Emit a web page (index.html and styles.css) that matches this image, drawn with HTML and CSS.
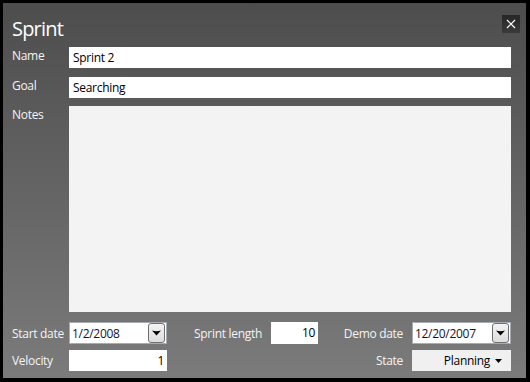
FILE: index.html
```html
<!DOCTYPE html>
<html>
<head>
<meta charset="utf-8">
<link rel="stylesheet" href="styles.css">
</head>
<body>
<div class="window">
  <div class="header">
    <div class="title">Sprint</div>
    <div class="close">
      <svg width="10" height="10" viewBox="0 0 10 10"><path d="M1 1L9 9M9 1L1 9" stroke="#fff" stroke-width="1.2"/></svg>
    </div>
  </div>
  <div class="row">
    <div class="label">Name</div>
    <div class="field">Sprint 2</div>
  </div>
  <div class="row row-goal">
    <div class="label">Goal</div>
    <div class="field">Searching</div>
  </div>
  <div class="row row-notes">
    <div class="label">Notes</div>
    <div class="notes"></div>
  </div>
  <div class="bottom">
    <div class="blabel">Start date</div>
    <div class="date">
      <span class="date-text">1/2/2008</span>
      <span class="date-btn"><svg width="9" height="6" viewBox="0 0 9 6"><path d="M0 0.5Q4.5 2 9 0.5L4.5 5.5Z" fill="#000"/></svg></span>
    </div>
    <div class="blabel right pr10">Sprint length</div>
    <div class="field num">10</div>
    <div class="blabel right pr10">Demo date</div>
    <div class="date">
      <span class="date-text">12/20/2007</span>
      <span class="date-btn"><svg width="9" height="6" viewBox="0 0 9 6"><path d="M0 0.5Q4.5 2 9 0.5L4.5 5.5Z" fill="#000"/></svg></span>
    </div>

    <div class="blabel">Velocity</div>
    <div class="field num">1</div>
    <div></div>
    <div></div>
    <div class="blabel right pr10">State</div>
    <div class="combo"><span>Planning</span><svg width="7" height="4" viewBox="0 0 7 4"><path d="M0 0H7L3.5 4Z" fill="#000"/></svg></div>
  </div>
</div>
</body>
</html>
```
FILE: styles.css
```css
html, body {
  margin: 0;
  padding: 0;
  background: #000;
}
body {
  width: 530px;
  height: 382px;
  overflow: hidden;
  font-family: "Open Sans", "Noto Sans", sans-serif;
  font-size: 12px;
  letter-spacing: -0.3px;
}
.window {
  margin: 3px 4px 0 3px;
  width: 523px;
  height: 375px;
  box-sizing: border-box;
  padding: 12px 15px 0 9px;
  background: linear-gradient(#4d4d4d, #7b7b7b);
  display: flex;
  flex-direction: column;
  color: #fff;
}
.header {
  height: 32px;
  display: flex;
  justify-content: space-between;
  align-items: flex-start;
}
.title {
  font-size: 20px;
  line-height: 26px;
  margin-top: 1px;
  letter-spacing: -0.8px;
  color: #fff;
}
.close {
  width: 18px;
  height: 18px;
  margin-right: -9px;
  background: linear-gradient(#262626, #3a3a3a);
  display: flex;
  align-items: center;
  justify-content: center;
}
.row {
  display: flex;
  height: 21px;
}
.row-goal { margin-top: 9px; }
.row-notes { margin-top: 8px; height: 206px; }
.label {
  width: 57px;
  line-height: 16px;
  padding-top: 1px;
  color: #f4f4f4;
}
.field {
  flex: 1;
  background: #fff;
  color: #000;
  line-height: 21px;
  padding: 0 4px;
  white-space: nowrap;
}
.notes {
  flex: 1;
  background: #f3f3f3;
}
.bottom {
  margin-top: 10px;
  display: grid;
  grid-template-columns: 57px 98px 104px 47px 94px 99px;
  grid-template-rows: 22px 21px;
  row-gap: 6px;
}
.blabel {
  color: #f4f4f4;
  display: flex;
  align-items: center;
  white-space: nowrap;
}
.right { justify-content: flex-end; }
.pr10 { padding-right: 9px; }
.num {
  text-align: right;
  padding-right: 3px;
}
.date {
  background: #fff;
  border: 1px solid #a5acb5;
  box-sizing: border-box;
  display: flex;
  align-items: center;
  color: #1a1030;
  padding-left: 2px;
}
.date-text { flex: 1; white-space: nowrap; }
.date-btn {
  width: 15px;
  height: 18px;
  margin-right: 1px;
  border: 1px solid #707070;
  border-radius: 3px;
  background: linear-gradient(#f4f4f4, #dcdcdc);
  display: flex;
  align-items: center;
  justify-content: center;
}
.combo {
  background: #f0f0f0;
  color: #000;
  display: flex;
  align-items: center;
  justify-content: flex-end;
  gap: 5px;
  padding-right: 9px;
}
```
